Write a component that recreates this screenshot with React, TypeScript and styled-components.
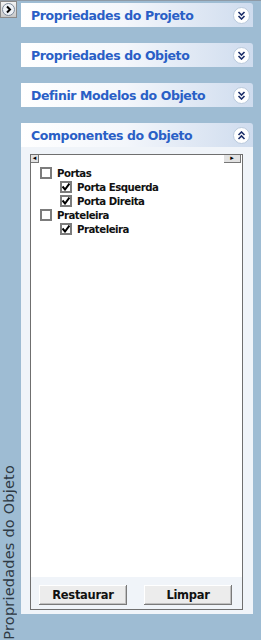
import React from "react"
import styled, { createGlobalStyle } from "styled-components"

const GlobalStyle = createGlobalStyle`
	html, body {
		margin: 0;
		padding: 0;
		background: #9ebcd3;
	}
	body {
		font-family: "DejaVu Sans", Verdana, sans-serif;
	}
`

const Frame = styled.div`
	width: 261px;
	height: 640px;
	display: flex;
	background: #9ebcd3;
	border-top: 1px solid #8e9aa6;
	box-sizing: border-box;
	overflow: hidden;
`

const SideStrip = styled.div`
	width: 21px;
	display: flex;
	flex-direction: column;
	justify-content: space-between;
	align-items: flex-start;
`

const PinButton = styled.div`
	width: 17px;
	height: 17px;
	box-sizing: border-box;
	border: 1px solid #8a8a8a;
	background: linear-gradient(#f4f4f4, #c8c8c8);
	display: flex;
	align-items: center;
	justify-content: center;
`

const SideLabel = styled.div`
	writing-mode: vertical-rl;
	transform: rotate(180deg);
	font-family: "DejaVu Sans", Verdana, sans-serif;
	font-size: 14.5px;
	letter-spacing: 0.2px;
	color: #2f3a44;
	margin: 0 0 0 1px;
	white-space: nowrap;
`

const PanelColumn = styled.div`
	flex: 1;
	display: flex;
	flex-direction: column;
	gap: 16px;
	padding: 2px 8px 0 0;
`

const Panel = styled.div<{ grow?: boolean }>`
	display: flex;
	flex-direction: column;
	${p => (p.grow ? "height: 491px;" : "")}
`

const Header = styled.div`
	height: 24px;
	display: flex;
	align-items: center;
	justify-content: space-between;
	padding: 0 3px 0 10px;
	background: linear-gradient(90deg, #ffffff 0%, #f3f6fb 45%, #cfdcee 100%);
	border-top-right-radius: 3px;
`

const Title = styled.span`
	font-family: "DejaVu Sans", Verdana, sans-serif;
	font-weight: bold;
	font-size: 12.5px;
	letter-spacing: -0.4px;
	color: #2a5fc6;
`

const Toggle = styled.div`
	width: 17px;
	height: 17px;
	border-radius: 50%;
	box-sizing: border-box;
	border: 1px solid #b9c9dc;
	background: #ffffff;
	display: flex;
	align-items: center;
	justify-content: center;
`

const Body = styled.div`
	flex: 1;
	background: #f0f4f9;
	padding: 7px 10px 4px 9px;
	display: flex;
`

const Box = styled.div`
	flex: 1;
	border: 1px solid #6f6f6f;
	display: flex;
	flex-direction: column;
`

const TreeArea = styled.div`
	flex: 1;
	background: #ffffff;
	position: relative;
	padding: 11px 0 0 9px;
`

const ScrollNub = styled.div<{ side: "left" | "right" }>`
	position: absolute;
	top: 0;
	${p => (p.side === "left" ? "left: 0; width: 8px;" : "right: 1px; width: 17px;")}
	height: 8px;
	box-sizing: border-box;
	background: #e2e2e2;
	border-right: 1px solid #777;
	border-bottom: 1px solid #777;
	display: flex;
	align-items: flex-end;
	justify-content: center;
`

const NubGlyph = styled.span`
	font-family: "DejaVu Sans", Verdana, sans-serif;
	font-size: 7px;
	line-height: 7px;
	font-weight: bold;
	color: #000;
`

const Row = styled.div<{ level: number }>`
	display: flex;
	align-items: center;
	height: 14px;
	padding-left: ${p => p.level * 20}px;
	gap: 5px;
`

const Check = styled.div`
	width: 12px;
	height: 12px;
	box-sizing: border-box;
	border: 2px solid #7c7c7c;
	background: #fff;
	display: flex;
	align-items: center;
	justify-content: center;
`

const Label = styled.span`
	font-family: "DejaVu Sans", Verdana, sans-serif;
	font-weight: bold;
	font-size: 10.2px;
	letter-spacing: -0.5px;
	color: #111;
`

const Footer = styled.div`
	height: 32px;
	display: flex;
	justify-content: space-between;
	align-items: flex-end;
	padding: 0 10px 4px 8px;
	box-sizing: border-box;
	background: #f0f4f9;
`

const Button = styled.button`
	width: 88px;
	height: 20px;
	border: none;
	background: #ececec;
	box-shadow: inset -1px -1px 0 #7a7a7a, inset 1px 1px 0 #ffffff, inset -2px -2px 0 #c0c0c0;
	font-family: "DejaVu Sans", Verdana, sans-serif;
	font-weight: bold;
	font-size: 11.5px;
	letter-spacing: -0.3px;
	color: #111;
	padding: 0;
`

const Chevrons = ({ up }: { up?: boolean }) => (
	<svg width="9" height="9" viewBox="0 0 9 9">
		<g fill="none" stroke="#1c2f6a" strokeWidth="1.6" transform={up ? "rotate(180 4.5 4.5)" : undefined}>
			<polyline points="1.5,1 4.5,4 7.5,1" />
			<polyline points="1.5,5 4.5,8 7.5,5" />
		</g>
	</svg>
)

const Tick = () => (
	<svg width="8" height="8" viewBox="0 0 8 8">
		<polyline points="0.5,3.5 3,6.5 7.5,0.5" fill="none" stroke="#000" strokeWidth="2" />
	</svg>
)

const sections = ["Propriedades do Projeto", "Propriedades do Objeto", "Definir Modelos do Objeto"]

const tree = [
	{ label: "Portas", level: 0, checked: false },
	{ label: "Porta Esquerda", level: 1, checked: true },
	{ label: "Porta Direita", level: 1, checked: true },
	{ label: "Prateleira", level: 0, checked: false },
	{ label: "Prateleira", level: 1, checked: true },
]

const App = () => (
	<>
		<GlobalStyle />
		<Frame>
			<SideStrip>
				<PinButton>
					<svg width="13" height="13" viewBox="0 0 13 13">
						<circle cx="6.5" cy="6.5" r="6" fill="#eef2f7" stroke="#7d8a9b" />
						<polyline points="5,3.5 8,6.5 5,9.5" fill="none" stroke="#000" strokeWidth="2" />
					</svg>
				</PinButton>
				<SideLabel>Propriedades do Objeto</SideLabel>
			</SideStrip>
			<PanelColumn>
				{sections.map(s => (
					<Panel key={s}>
						<Header>
							<Title>{s}</Title>
							<Toggle><Chevrons /></Toggle>
						</Header>
					</Panel>
				))}
				<Panel grow>
					<Header>
						<Title>Componentes do Objeto</Title>
						<Toggle><Chevrons up /></Toggle>
					</Header>
					<Body>
						<Box>
							<TreeArea>
								<ScrollNub side="left"><NubGlyph>◂</NubGlyph></ScrollNub>
								<ScrollNub side="right"><NubGlyph>▸</NubGlyph></ScrollNub>
								{tree.map((t, i) => (
									<Row key={i} level={t.level}>
										<Check>{t.checked && <Tick />}</Check>
										<Label>{t.label}</Label>
									</Row>
								))}
							</TreeArea>
							<Footer>
								<Button>Restaurar</Button>
								<Button>Limpar</Button>
							</Footer>
						</Box>
					</Body>
				</Panel>
			</PanelColumn>
		</Frame>
	</>
)

export default App
